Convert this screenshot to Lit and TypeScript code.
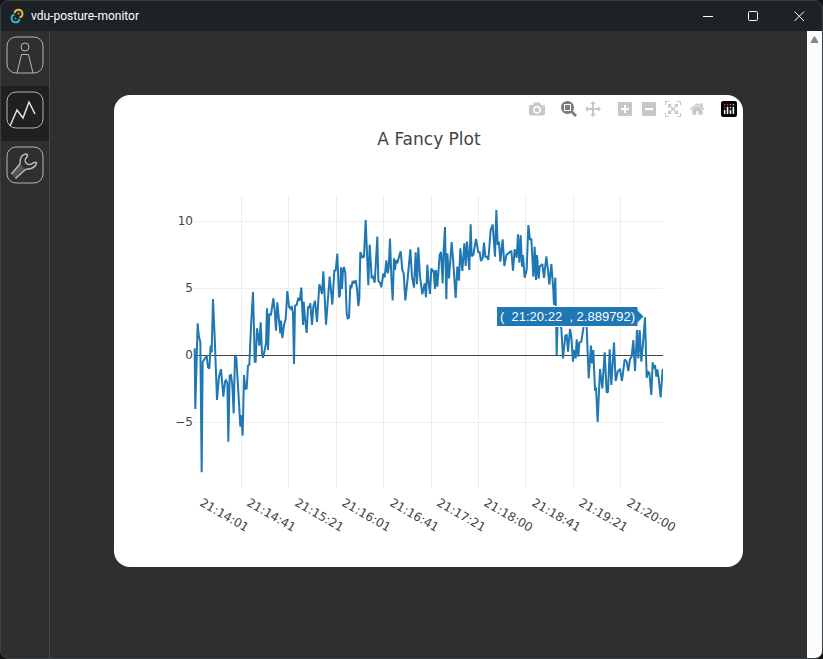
import { LitElement, css, html, svg } from "lit";
import { customElement, property, state } from "lit/decorators.js";

const FLIP = "matrix(1 0 0 -1 0 850)";

/* Mode bar glyphs, drawn in a y-up box of `width` by 1000 units. */
const GLYPHS = {
  camera: {
    width: 1000,
    path: "m500 450c-83 0-150-67-150-150 0-83 67-150 150-150 83 0 150 67 150 150 0 83-67 150-150 150z m400 150h-120c-16 0-34 13-39 29l-31 93c-6 15-23 28-40 28h-340c-16 0-34-13-39-28l-31-94c-6-15-23-28-40-28h-120c-55 0-100-45-100-100v-450c0-55 45-100 100-100h800c55 0 100 45 100 100v450c0 55-45 100-100 100z m-400-550c-138 0-250 112-250 250 0 138 112 250 250 250 138 0 250-112 250-250 0-138-112-250-250-250z m365 380c-19 0-35 16-35 35 0 19 16 35 35 35 19 0 35-16 35-35 0-19-16-35-35-35z",
  },
  zoombox: {
    width: 1000,
    path: "m1000-25l-250 251c40 63 63 138 63 218 0 224-182 406-407 406-224 0-406-182-406-406s183-406 407-406c80 0 155 22 218 62l250-250 125 125z m-812 250l0 438 437 0 0-438-437 0z m62 375l313 0 0-312-313 0 0 312z",
  },
  pan: {
    width: 1000,
    path: "m1000 350l-187 188 0-125-250 0 0 250 125 0-188 187-187-187 125 0 0-250-250 0 0 125-188-188 186-187 0 125 252 0 0-250-125 0 187-188 188 188-125 0 0 250 250 0 0-126 187 188z",
  },
  plus: {
    width: 875,
    path: "m1 787l0-875 875 0 0 875-875 0z m687-500l-187 0 0-187-125 0 0 187-188 0 0 125 188 0 0 187 125 0 0-187 187 0 0-125z",
  },
  minus: {
    width: 875,
    path: "m0 788l0-876 876 0 0 876-876 0z m688-500l-500 0 0 125 500 0 0-125z",
  },
  autoscale: {
    width: 1000,
    path: "m250 850l-187 0-63 0 0-62 0-188 63 0 0 188 187 0 0 62z m688 0l-188 0 0-62 188 0 0-188 62 0 0 188 0 62-62 0z m-875-938l0 188-63 0 0-188 0-62 63 0 187 0 0 62-187 0z m875 188l0-188-188 0 0-62 188 0 62 0 0 62 0 188-62 0z m-125 188l-1 0-93-94-156 156 156 156 92-93 2 0 0 250-250 0 0-2 93-92-156-156-156 156 94 92 0 2-250 0 0-250 0 0 93 93 157-156-157-156-93 94 0 0 0-250 250 0 0 0-94 93 156 157 156-157-93-93 0 0 250 0 0 250z",
  },
  home: {
    width: 928,
    path: "m786 296v-267q0-15-11-26t-25-10h-214v214h-143v-214h-214q-15 0-25 10t-11 26v267q0 1 0 2t0 2l321 264 321-264q1-1 1-4z m124 39l-34-41q-5-5-12-6h-2q-7 0-12 3l-386 322-386-322q-7-4-13-4-7 2-12 7l-35 41q-4 5-3 13t6 12l401 334q18 15 42 15t43-15l136-114v109q0 8 5 13t13 5h107q8 0 13-5t5-13v-227l122-102q5-5 6-12t-4-13z",
  },
};

type GlyphName = keyof typeof GLYPHS;

const TOOL_GROUPS: { name: GlyphName; label: string }[][] = [
  [{ name: "camera", label: "Download plot as a png" }],
  [
    { name: "zoombox", label: "Zoom" },
    { name: "pan", label: "Pan" },
  ],
  [
    { name: "plus", label: "Zoom in" },
    { name: "minus", label: "Zoom out" },
    { name: "autoscale", label: "Autoscale" },
    { name: "home", label: "Reset axes" },
  ],
];

/* The trace, three units to each pixel of the plot. */
const TRACE = `
74,475 76,657 83,400 86,435 91,457 95,847 98,516 105,505 110,498 114,532 118,536 122,467 125,487 129,327
134,440 141,630 147,560 153,538 160,620 165,575 168,571 172,580 175,755 179,557 183,555 187,585 191,670
195,497 199,505 205,605 211,710 214,676 218,737 222,555 226,596 230,595 234,527 238,524 243,410 249,306
252,420 254,515 257,515 261,415 265,440 268,467 272,397 276,490 279,503 283,485 288,460 291,355 294,480
298,373 303,374 310,325 314,360 318,422 322,337 326,380 331,430 333,392 337,444 342,405 347,388 352,303
357,350 363,358 365,348 369,370 372,522 375,347 380,345 385,323 389,333 394,293 399,405 401,335 405,385
410,429 414,352 418,352 421,340 426,405 430,350 435,332 441,396 448,283 452,295 456,312 460,244 464,320
468,404 474,325 479,260 487,344 493,240 497,243 502,191 507,322 510,316 513,232 516,297 519,240 522,231
526,250 530,370 533,385 537,383 541,284 544,295 548,273 552,280 557,271 561,295 565,348 568,325 571,186
577,202 582,200 587,90 591,190 595,286 599,164 605,262 609,260 614,278 618,210 622,140 625,273 630,278
634,292 640,250 644,262 649,211 653,250 656,235 660,146 664,260 668,331 672,205 675,240 678,210 682,220
687,200 692,184 697,240 701,250 706,331 713,265 721,178 726,260 732,293 737,187 741,283 745,172 750,260
757,313 764,280 768,322 772,224 776,280 780,312 784,235 788,245 791,240 795,297 798,240 802,290 809,195
813,186 818,280 821,180 825,111 829,328 832,190 837,265 845,156 850,220 857,324 862,230 867,272 871,175
877,243 883,160 887,228 891,155 898,240 902,103 905,199 910,195 918,147 925,187 929,187 933,213 938,204
942,158 946,200 951,200 955,210 962,120 968,104 975,200 979,60 983,165 987,155 991,215 998,148 1003,228
1009,195 1024,182 1029,242 1034,178 1040,203 1044,133 1048,218 1052,136 1056,230 1059,195 1064,263
1070,240 1075,105 1080,150 1084,146 1090,260 1094,170 1098,270 1101,195 1106,266 1109,230 1117,222
1122,264 1129,199 1134,240 1138,284 1144,222 1150,300 1152,345 1156,263 1160,495 1163,390 1174,415
1179,505 1186,437 1190,435 1194,485 1200,417 1204,440 1209,515 1212,480 1217,505 1220,448 1225,500
1228,458 1234,455 1240,415 1244,390 1250,410 1256,565 1263,467 1266,520 1270,480 1275,602 1278,592
1283,696 1290,537 1297,595 1304,487 1310,608 1314,605 1319,478 1324,585 1332,458 1337,573 1343,545
1350,537 1356,573 1364,508 1370,515 1375,543 1380,507 1385,500 1390,450 1395,543 1401,420 1405,505
1409,420 1414,515 1419,460 1425,382 1430,563 1434,545 1438,548 1444,615 1448,517 1451,535 1455,525
1459,560 1462,538 1466,565 1472,622 1478,537`;

const X_TICKS = [
  { x: 85, label: "21:14:01" },
  { x: 132, label: "21:14:41" },
  { x: 180, label: "21:15:21" },
  { x: 227, label: "21:16:01" },
  { x: 275, label: "21:16:41" },
  { x: 322, label: "21:17:21" },
  { x: 369, label: "21:18:00" },
  { x: 417, label: "21:18:41" },
  { x: 464, label: "21:19:21" },
  { x: 512, label: "21:20:00" },
];
const X_GRID = [127, 174, 222, 269, 317, 364, 411, 459, 506];
const Y_TICKS = [
  { y: 126, label: "10" },
  { y: 193, label: "5" },
  { y: 260, label: "0" },
  { y: 327, label: "−5" },
];

@customElement("plot-card")
export class PlotCard extends LitElement {
  @state() private mode: GlyphName = "zoombox";

  static styles = css`
    :host {
      display: block;
      position: relative;
      overflow: hidden;
      border-radius: 16px;
      background: #fff;
      color: #444;
    }
    .modebar {
      position: absolute;
      top: 6px;
      right: 2px;
      display: flex;
    }
    .group {
      display: flex;
      padding-left: 8px;
    }
    .tool {
      display: flex;
      align-items: center;
      justify-content: center;
      width: 24px;
      height: 16px;
      padding: 0;
      border: 0;
      background: none;
      color: #c7c7c7;
      cursor: pointer;
    }
    .tool.on {
      color: #7c7c7c;
    }
    .tool svg {
      display: block;
      height: 16px;
    }
    .plot {
      display: block;
      width: 100%;
      height: auto;
    }
    .title {
      font: 17px "DejaVu Sans", Verdana, sans-serif;
      fill: #444;
      text-anchor: middle;
    }
    .tick {
      font: 12px "DejaVu Sans", Verdana, sans-serif;
      fill: #444;
    }
    .end {
      text-anchor: end;
    }
    .grid {
      stroke: #eee;
      shape-rendering: crispEdges;
    }
    .zero {
      stroke: #444;
      shape-rendering: crispEdges;
    }
    .trace {
      fill: none;
      stroke: #1f77b4;
      stroke-width: 6;
      stroke-miterlimit: 2;
    }
    .hover {
      fill: #1f77b4;
      stroke: #fff;
    }
    .hover-text {
      font: 13px "Liberation Sans", Arial, sans-serif;
      fill: #fff;
      white-space: pre;
    }
  `;

  private tool(name: GlyphName, label: string) {
    const { width, path } = GLYPHS[name];
    return html`<button
      class="tool ${this.mode === name ? "on" : ""}"
      aria-label=${label}
      @click=${() => {
        if (name === "zoombox" || name === "pan") this.mode = name;
      }}
    >
      <svg viewBox="0 0 ${width} 1000" fill="currentColor" aria-hidden="true">
        <path transform=${FLIP} d=${path} />
      </svg>
    </button>`;
  }

  render() {
    return html`
      <svg class="plot" viewBox="0 0 629 472" role="img" aria-label="A Fancy Plot">
        ${X_GRID.map((x) => svg`<line class="grid" x1=${x + 0.5} x2=${x + 0.5} y1="100" y2="393" />`)}
        ${Y_TICKS.map(
          ({ y }) =>
            svg`<line class=${y === 260 ? "zero" : "grid"} x1="80" x2="549" y1=${y + 0.5} y2=${y + 0.5} />`,
        )}
        <svg x="56" y="95" width="493" height="300" viewBox="0 0 1479 900">
          <polyline class="trace" points=${TRACE.trim()} />
        </svg>
        ${Y_TICKS.map(({ y, label }) => svg`<text class="tick end" x="79" y=${y + 4}>${label}</text>`)}
        ${X_TICKS.map(
          ({ x, label }) =>
            svg`<text class="tick" transform="translate(${x} 410) rotate(30)">${label}</text>`,
        )}
        <text class="title" x="315" y="50">A Fancy Plot</text>
        <path class="hover" d="M530 221.500L524 215.500V211.500H382.500V231.500H524V227.500Z" />
        <text class="hover-text" x="386" y="226">(  21:20:22  , 2.889792)</text>
      </svg>
      <div class="modebar">
        ${TOOL_GROUPS.map(
          (group) => html`<div class="group">${group.map((t) => this.tool(t.name, t.label))}</div>`,
        )}
        <div class="group">
          <button class="tool" aria-label="Produced with Plotly">
            <svg viewBox="0 0 132 132" aria-hidden="true">
              <rect width="132" height="132" rx="18" fill="#000" />
              <g fill="#e0245e">
                <circle cx="30" cy="30" r="7" />
                <circle cx="30" cy="54" r="7" />
                <circle cx="54" cy="30" r="7" />
              </g>
              <circle cx="78" cy="30" r="7" fill="#b76a80" />
              <circle cx="78" cy="54" r="7" fill="#f3a6b8" />
              <circle cx="102" cy="30" r="7" fill="#6cc" />
              <path
                d="M30 78V102M54 54V102M78 78V102M102 54V102"
                stroke="#fff"
                stroke-width="13"
                stroke-linecap="round"
              />
            </svg>
          </button>
        </div>
      </div>
    `;
  }
}

const NAV_ICONS = {
  posture: svg`<circle cx="19" cy="11" r="4" />
    <path d="M11 37L15.500 18.500H22.500L27 37" />`,
  plot: svg`<path stroke-width="1.500" d="M4 35L11 19L17 27L23 11L29 23" />`,
  settings: svg`<path fill="#555" stroke="none" d="M13.500 17.500L5.500 28L9.500 32.500L19.500 23.500Z" />
    <path
      stroke-width="1.500"
      d="M5.500 28L13.500 18.500C14.500 17 14 15 14.500 13C15 10.500 17 8.500 20 8C22 8 22 9.500 20.500 11.500C19 13 18.500 15.500 20.500 17.500C22 19 25 19 27 17C28.500 16.500 30 15.500 30.500 17C30 19.500 28 21.500 25 22.500C22.500 23.500 21 22.500 19.500 23.500L9.500 32.500"
    />`,
};

type View = keyof typeof NAV_ICONS;

@customElement("nav-rail")
export class NavRail extends LitElement {
  @property() view: View = "plot";

  static styles = css`
    :host {
      display: block;
      border-right: 1px solid #484848;
    }
    nav {
      display: flex;
      flex-direction: column;
    }
    .item {
      display: flex;
      width: 48px;
      height: 55px;
      padding: 5px;
      border: 0;
      background: none;
      cursor: pointer;
    }
    .item.active {
      background: #202020;
    }
    .item svg {
      width: 39px;
      height: 39px;
      flex: none;
      fill: none;
      stroke: #b8b8b8;
    }
    .item.active svg {
      stroke: #e4e4e4;
    }
    .frame {
      stroke: #b4b4b4;
    }
  `;

  private item(view: View, label: string) {
    return html`<button
      class="item ${this.view === view ? "active" : ""}"
      aria-label=${label}
      @click=${() => (this.view = view)}
    >
      <svg viewBox="0 0 39 39" aria-hidden="true">
        <rect class="frame" x="1" y="1" width="36" height="36" rx="9" />
        ${NAV_ICONS[view]}
      </svg>
    </button>`;
  }

  render() {
    return html`<nav>
      ${this.item("posture", "Posture")} ${this.item("plot", "Plot")}
      ${this.item("settings", "Settings")}
    </nav>`;
  }
}

@customElement("app-root")
export class AppRoot extends LitElement {
  static styles = css`
    :host {
      display: block;
      background: #111;
    }
    .window {
      box-sizing: border-box;
      display: flex;
      flex-direction: column;
      min-height: 100vh;
      overflow: hidden;
      border: 1px solid #3a3e40;
      border-radius: 8px;
      background: #2f2f2f;
    }
    .titlebar {
      display: flex;
      align-items: center;
      height: 30px;
      padding-left: 9px;
      background: #1c2225;
      color: #fff;
      font: 12px Roboto, "Open Sans", sans-serif;
    }
    .logo {
      width: 14px;
      height: 16px;
      margin-right: 7px;
    }
    .name {
      flex: 1;
    }
    .control {
      display: flex;
      align-items: center;
      justify-content: center;
      width: 46px;
      height: 30px;
      padding: 0;
      border: 0;
      background: none;
    }
    .control svg {
      width: 11px;
      height: 11px;
      fill: none;
      stroke: #fff;
    }
    .body {
      display: flex;
      flex: 1;
    }
    main {
      flex: 1;
      min-width: 0;
      padding: 64px;
    }
    .scrollbar {
      width: 15px;
      background: #fcfcfc;
    }
    .scrollbar svg {
      display: block;
      margin: 4px auto;
    }
  `;

  render() {
    return html`<div class="window">
      <header class="titlebar">
        <svg class="logo" viewBox="0 0 14 16" fill="none" stroke-width="2" aria-hidden="true">
          <path stroke="#e8b339" d="M4.500 5A4 4 0 1 1 9.500 9.500" />
          <path stroke="#2bb5c9" d="M9.500 11A4 4 0 1 1 4.500 6.500" />
          <circle cx="8.500" cy="5.500" r="1" fill="#e8b339" />
          <circle cx="5.500" cy="10.500" r="1" fill="#2bb5c9" />
        </svg>
        <span class="name">vdu-posture-monitor</span>
        <button class="control" aria-label="Minimize">
          <svg viewBox="0 0 11 11"><path d="M1 5.500H11" /></svg>
        </button>
        <button class="control" aria-label="Maximize">
          <svg viewBox="0 0 11 11"><rect x="0.500" y="0.500" width="9" height="9" rx="1" /></svg>
        </button>
        <button class="control" aria-label="Close">
          <svg viewBox="0 0 11 11"><path d="M0.500 0.500L10 10M10 0.500L0.500 10" /></svg>
        </button>
      </header>
      <div class="body">
        <nav-rail view="plot"></nav-rail>
        <main><plot-card></plot-card></main>
        <div class="scrollbar">
          <svg width="9" height="9" viewBox="0 0 9 9" aria-hidden="true">
            <path d="M4.500 1.500L8 7.500H1Z" fill="#858585" stroke="#858585" stroke-linejoin="round" />
          </svg>
        </div>
      </div>
    </div>`;
  }
}
